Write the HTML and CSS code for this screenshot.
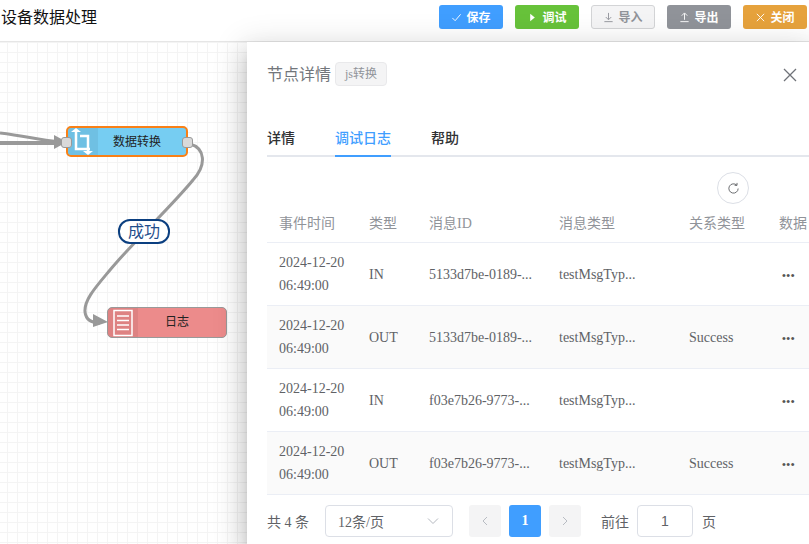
FILE: index.html
```html
<!DOCTYPE html>
<html lang="en">
<head>
	<meta charset="UTF-8">
	<title>设备数据处理</title>
	<link rel="stylesheet" href="styles.css">
</head>
<body>
	<div class="page">
		<div class="header">
			<h1 class="title">设备数据处理</h1>
			<div class="actions">
				<span class="btn btn-save"><svg viewBox="0 0 12 12"><path d="M1.500 6.500l3 3 6-7" fill="none" stroke="currentColor"/></svg>保存</span>
				<span class="btn btn-debug"><svg viewBox="0 0 12 12"><path d="M3.500 2l5 4-5 4z" fill="currentColor"/></svg>调试</span>
				<span class="btn btn-import"><svg viewBox="0 0 12 12"><path d="M6 1v7M3 5.500L6 8.500l3-3M1.500 10.500h9" fill="none" stroke="currentColor"/></svg>导入</span>
				<span class="btn btn-export"><svg viewBox="0 0 12 12"><path d="M6 8.500v-7M3 4l3-3 3 3M1.500 10.500h9" fill="none" stroke="currentColor"/></svg>导出</span>
				<span class="btn btn-close"><svg viewBox="0 0 12 12"><path d="M2 2l8 8M10 2l-8 8" fill="none" stroke="currentColor"/></svg>关闭</span>
			</div>
		</div>

		<div class="canvas">
			<svg class="wires" width="809" height="502" viewBox="0 42 809 502">
				<g fill="none" stroke="#999">
					<path d="M0 133C25 136 40 140 60 142" stroke-width="3"/>
					<path d="M0 143H60" stroke-width="4"/>
					<path d="M190 144C205 148 207 165 193 180C170 208 135 240 110 270C95 288 84 300 85 312C86 320 92 323 100 323" stroke-width="3"/>
				</g>
				<path d="M54 135L67 142L54 149z" fill="#999"/>
				<path d="M93 314L108 322L93 327z" fill="#999"/>
			</svg>

			<div class="node node-transform">
				<span class="node-icon">
					<svg viewBox="0 0 30 30" width="30" height="30">
						<path d="M8 5V22H22M12 9H20V25" fill="none" stroke="#fff" stroke-width="2.500"/>
						<path d="M8 1L13 5H3zM15 24H25L20 28z" fill="#fff"/>
					</svg>
				</span>
				<span class="node-label">数据转换</span>
				<i class="port port-in"></i>
				<i class="port port-out"></i>
			</div>

			<div class="wire-label">成功</div>

			<div class="node node-log">
				<span class="node-icon">
					<svg viewBox="0 0 30 30" width="30" height="30"><path d="M6 2.500H24V27.500H6zM9 8H21M9 12.500H21M9 17H21M9 21.500H21" fill="none" stroke="#fff" stroke-width="1.500"/></svg>
				</span>
				<span class="node-label">日志</span>
			</div>
		</div>

		<div class="drawer">
			<div class="drawer-head">
				<span class="drawer-title">节点详情</span>
				<span class="tag">js转换</span>
				<svg class="drawer-close" viewBox="0 0 14 14" width="14" height="14"><path d="M1 1l12 12M13 1L1 13" fill="none" stroke="#6f7278" stroke-width="1.300"/></svg>
			</div>

			<ul class="tabs">
				<li>详情</li>
				<li class="selected">调试日志</li>
				<li>帮助</li>
			</ul>

			<div class="toolbar">
				<span class="refresh">
					<svg viewBox="0 0 14 14" width="13" height="13"><path d="M12 7a5 5 0 1 1-1.500-3.600M10.800 1v2.600H8.200" fill="none" stroke="#606266" stroke-width="1"/></svg>
				</span>
			</div>

			<table class="log-table">
				<colgroup>
					<col class="c-time"><col class="c-type"><col class="c-id"><col class="c-msg"><col class="c-rel"><col class="c-data">
				</colgroup>
				<thead>
					<tr><th>事件时间</th><th>类型</th><th>消息ID</th><th>消息类型</th><th>关系类型</th><th>数据</th></tr>
				</thead>
				<tbody>
					<tr>
						<td>2024-12-20 06:49:00</td><td>IN</td><td>5133d7be-0189-...</td><td>testMsgTyp...</td><td></td><td class="more">•••</td>
					</tr>
					<tr class="striped">
						<td>2024-12-20 06:49:00</td><td>OUT</td><td>5133d7be-0189-...</td><td>testMsgTyp...</td><td>Success</td><td class="more">•••</td>
					</tr>
					<tr>
						<td>2024-12-20 06:49:00</td><td>IN</td><td>f03e7b26-9773-...</td><td>testMsgTyp...</td><td></td><td class="more">•••</td>
					</tr>
					<tr class="striped">
						<td>2024-12-20 06:49:00</td><td>OUT</td><td>f03e7b26-9773-...</td><td>testMsgTyp...</td><td>Success</td><td class="more">•••</td>
					</tr>
				</tbody>
			</table>

			<div class="pager">
				<span class="total">共 4 条</span>
				<span class="size-select">12条/页
					<svg viewBox="0 0 12 12" width="12" height="12"><path d="M1 3.500l5 5 5-5" fill="none" stroke="#b4b8bf"/></svg>
				</span>
				<span class="page-btn"><svg viewBox="0 0 10 10" width="10" height="10"><path d="M7 1L3 5l4 4" fill="none" stroke="#b8bcc3"/></svg></span>
				<span class="page-btn current">1</span>
				<span class="page-btn"><svg viewBox="0 0 10 10" width="10" height="10"><path d="M3 1l4 4-4 4" fill="none" stroke="#b8bcc3"/></svg></span>
				<span class="goto">前往</span>
				<span class="goto-input">1</span>
				<span class="goto-unit">页</span>
			</div>
		</div>
	</div>
</body>
</html>
```

FILE: styles.css
```css
*{
	margin: 0;
	padding: 0;
	box-sizing: border-box;
}
ul{
	list-style: none;
}
html, body{
	width: 100%;
	height: 100%;
	overflow: hidden;
}
body{
	font-family: "Liberation Serif", "Noto Sans CJK SC", serif;
	color: #606266;
	background: #fff;
}
.page{
	position: relative;
	width: 809px;
	height: 544px;
	overflow: hidden;
}
.header{
	height: 42px;
	display: flex;
	align-items: flex-start;
	justify-content: space-between;
	padding: 5px 2px 0 1px;
	background: #fff;
	border-bottom: 1px solid #e6e6e6;
}
.title{
	font-size: 16px;
	line-height: 25px;
	font-weight: 400;
	color: #111;
}
.actions{
	display: flex;
	gap: 12px;
}
.btn{
	width: 64px;
	height: 24px;
	display: flex;
	align-items: center;
	justify-content: center;
	gap: 4px;
	border-radius: 3px;
	font-size: 12px;
	font-weight: 700;
	color: #fff;
}
.btn svg{
	width: 11px;
	height: 11px;
}
.btn-save{
	background: #409eff;
}
.btn-debug{
	background: #67c23a;
}
.btn-import{
	background: #f4f4f5;
	border: 1px solid #d3d4d6;
	color: #909399;
}
.btn-export{
	background: #909399;
}
.btn-close{
	background: #e6a23c;
}

.canvas{
	position: relative;
	height: 502px;
	background-color: #fff;
	background-image:
		linear-gradient(#f4f4f4 1px, transparent 1px),
		linear-gradient(90deg, #f4f4f4 1px, transparent 1px);
	background-size: 10px 10px;
	background-position: 7px 0;
}
.wires{
	position: absolute;
	left: 0;
	top: 0;
}
.node{
	position: absolute;
	display: flex;
	height: 31px;
	border-radius: 5px;
	font-size: 12px;
	color: #222;
}
.node-transform{
	left: 66px;
	top: 84px;
	width: 122px;
	background: #76cdf2;
	border: 2px solid #f98016;
}
.node-log{
	left: 107px;
	top: 265px;
	width: 120px;
	background: #ec8b8b;
	border: 1px solid #999;
}
.node-icon{
	width: 30px;
	flex: none;
	display: flex;
	align-items: center;
	justify-content: center;
	background: rgba(0, 0, 0, .06);
	border-radius: 4px 0 0 4px;
}
.node-label{
	flex: 1;
	padding-right: 10px;
	text-align: center;
	line-height: 28px;
}
.node-log .node-label{
	line-height: 29px;
}
.port{
	position: absolute;
	top: 9px;
	width: 11px;
	height: 11px;
	background: #d9d9d9;
	border: 1px solid #999;
	border-radius: 3px;
}
.port-in{
	left: -7px;
}
.port-out{
	right: -7px;
}
.wire-label{
	position: absolute;
	left: 118px;
	top: 177px;
	width: 52px;
	height: 25px;
	line-height: 22px;
	text-align: center;
	font-size: 16px;
	color: #1f4e8c;
	background: #fff;
	border: 2px solid #0b3f80;
	border-radius: 12px;
}

.drawer{
	position: absolute;
	left: 247px;
	top: 42px;
	width: 562px;
	height: 502px;
	background: #fff;
	box-shadow: 0 8px 10px -5px rgba(0, 0, 0, .2), 0 16px 24px 2px rgba(0, 0, 0, .14), 0 6px 30px 5px rgba(0, 0, 0, .12);
	padding-left: 20px;
}
.drawer-head{
	position: relative;
	display: flex;
	align-items: center;
	gap: 4px;
	height: 66px;
	padding-bottom: 2px;
}
.drawer-title{
	font-size: 16px;
	color: #72767b;
	margin-bottom: 3px;
}
.tag{
	height: 24px;
	line-height: 22px;
	padding: 0 9px;
	font-size: 12px;
	color: #909399;
	background: #f4f4f5;
	border: 1px solid #e9e9eb;
	border-radius: 4px;
}
.drawer-close{
	position: absolute;
	right: 12px;
	top: 26px;
}
.tabs{
	display: flex;
	gap: 40px;
	height: 49px;
	padding-top: 21px;
	border-bottom: 2px solid #e4e7ed;
	font-size: 14px;
	color: #303133;
}
.tabs li{
	height: 28px;
	line-height: 20px;
	font-weight: 500;
}
.tabs .selected{
	color: #409eff;
	border-bottom: 2px solid #409eff;
}
.toolbar{
	display: flex;
	justify-content: flex-end;
	padding: 15px 60px 0 0;
	height: 47px;
}
.refresh{
	width: 32px;
	height: 32px;
	display: flex;
	align-items: center;
	justify-content: center;
	border: 1px solid #dcdfe6;
	border-radius: 50%;
}
.log-table{
	table-layout: fixed;
	width: 542px;
	border-collapse: collapse;
	font-size: 14px;
}
.c-time{
	width: 90px;
}
.c-type{
	width: 60px;
}
.c-id, .c-msg{
	width: 130px;
}
.c-rel{
	width: 90px;
}
.c-data{
	width: 42px;
}
.log-table th{
	height: 38px;
	padding: 0 12px 2px;
	text-align: left;
	font-weight: 400;
	color: #909399;
	white-space: nowrap;
	border-bottom: 1px solid #ebeef5;
}
.log-table th:last-child{
	padding-right: 0;
}
.log-table td{
	height: 63px;
	padding: 1px 12px 0;
	line-height: 23px;
	color: #606266;
	border-bottom: 1px solid #ebeef5;
}
.log-table .striped td{
	background: #fafafa;
}
.log-table .more{
	padding: 4px 0 0 15px;
	font-size: 11px;
	letter-spacing: .5px;
	white-space: nowrap;
	font-family: "Liberation Sans", sans-serif;
	color: #555;
}
.pager{
	display: flex;
	align-items: center;
	height: 52px;
	font-size: 14px;
	color: #606266;
}
.total{
	width: 58px;
}
.size-select{
	width: 128px;
	height: 32px;
	display: flex;
	align-items: center;
	justify-content: space-between;
	padding: 0 13px 0 12px;
	border: 1px solid #dcdfe6;
	border-radius: 4px;
	margin-right: 16px;
}
.page-btn{
	width: 32px;
	height: 32px;
	display: flex;
	align-items: center;
	justify-content: center;
	background: #f4f4f5;
	border-radius: 3px;
	margin-right: 8px;
}
.page-btn.current{
	background: #409eff;
	color: #fff;
	font-weight: 700;
}
.goto{
	margin-left: 12px;
	margin-right: 8px;
}
.goto-input{
	width: 56px;
	height: 32px;
	line-height: 30px;
	text-align: center;
	border: 1px solid #dcdfe6;
	border-radius: 4px;
	font-family: "Liberation Sans", sans-serif;
	margin-right: 8px;
}
.goto-unit{
	margin-left: 1px;
}
```
